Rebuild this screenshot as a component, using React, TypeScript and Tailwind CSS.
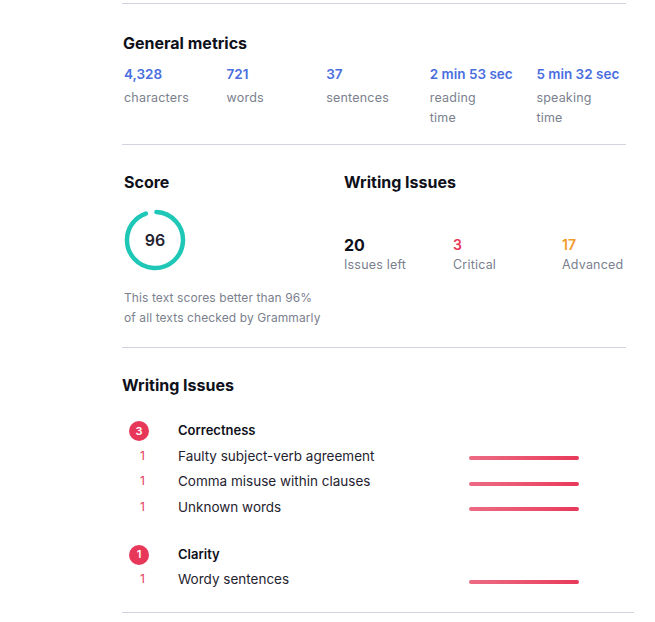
import React from "react";

const metrics = [
  { value: "4,328", label: "characters", w: "w-[104px]" },
  { value: "721", label: "words", w: "w-[100px]" },
  { value: "37", label: "sentences", w: "w-[104px]" },
  { value: "2 min 53 sec", label: "reading time", w: "w-[107px]" },
  { value: "5 min 32 sec", label: "speaking time", w: "w-[90px]" },
];

const groups = [
  {
    name: "Correctness",
    count: 3,
    items: ["Faulty subject-verb agreement", "Comma misuse within clauses", "Unknown words"],
  },
  { name: "Clarity", count: 1, items: ["Wordy sentences"] },
];

function ScoreRing({ score }: { score: number }) {
  const r = 28;
  const c = 2 * Math.PI * r;
  return (
    <div className="relative w-[62px] h-[62px]">
      <svg width="62" height="62" viewBox="0 0 62 62" className="-rotate-90">
        <circle
          cx="31"
          cy="31"
          r={r}
          fill="none"
          stroke="#1ec7b6"
          strokeWidth="4.5"
          strokeLinecap="round"
          strokeDasharray={`${(c * score) / 100 - 4} ${c}`}
          transform="rotate(3 31 31)"
        />
      </svg>
      <span className="absolute inset-0 flex items-center justify-center text-[16px] font-semibold text-[#1f2330]">
        {score}
      </span>
    </div>
  );
}

export default function App() {
  return (
    <div className="min-h-[622px] bg-white font-['Inter',sans-serif] text-[#0e101a]">
      <div className="ml-[122px] w-[504px] pt-[3px]">
        <div className="border-t border-[#d2d5df]" />

        <section className="pt-[28px] pb-[16px] pl-[1px]">
          <h2 className="text-[16px] font-bold leading-[22px]">General metrics</h2>
          <div className="flex mt-[10px]">
            {metrics.map((m) => (
              <div key={m.value} className={`${m.w} ${m.value === "4,328" ? "pl-[1px]" : ""}`}>
                <div className="text-[13.5px] font-semibold text-[#4a6ee0] leading-[20px]">{m.value}</div>
                <div className="max-w-[70px] text-[12.5px] tracking-[0.2px] text-[#7b7f8e] leading-[20px] mt-[4px]">
                  {m.label}
                </div>
              </div>
            ))}
          </div>
        </section>

        <div className="border-t border-[#d2d5df]" />

        <section className="flex pt-[26px] pb-[19px]">
          <div className="w-[222px] pl-[2px]">
            <h2 className="text-[16px] font-bold leading-[22px]">Score</h2>
            <div className="mt-[16px]">
              <ScoreRing score={96} />
            </div>
            <p className="mt-[17px] text-[12px] leading-[20px] tracking-[0.1px] text-[#7b7f8e]">
              This text scores better than 96%
              <br />
              of all texts checked by Grammarly
            </p>
          </div>
          <div>
            <h2 className="text-[16px] font-bold leading-[22px]">Writing Issues</h2>
            <div className="flex mt-[42px]">
              <div className="w-[109px]">
                <div className="text-[16px] font-bold leading-[20px]">20</div>
                <div className="text-[12.5px] tracking-[0.2px] text-[#7b7f8e] leading-[20px]">Issues left</div>
              </div>
              <div className="w-[109px]">
                <div className="text-[14px] font-semibold text-[#e8385a] leading-[20px]">3</div>
                <div className="text-[12.5px] tracking-[0.2px] text-[#7b7f8e] leading-[20px]">Critical</div>
              </div>
              <div>
                <div className="text-[14px] font-semibold text-[#f09a2a] leading-[20px]">17</div>
                <div className="text-[12.5px] tracking-[0.2px] text-[#7b7f8e] leading-[20px]">Advanced</div>
              </div>
            </div>
          </div>
        </section>

        <div className="border-t border-[#d2d5df]" />

        <section className="pt-[26px] pb-[20px]">
          <h2 className="text-[16px] font-bold leading-[22px]">Writing Issues</h2>
          <div className="mt-[23px] flex flex-col gap-[23px]">
            {groups.map((g) => (
              <div key={g.name}>
                <div className="flex items-center h-[24px]">
                  <div className="w-[56px] pl-[7px]">
                    <span className="flex w-[20px] h-[20px] rounded-full bg-[#e8385a] text-white text-[11px] font-semibold items-center justify-center">
                      {g.count}
                    </span>
                  </div>
                  <span className="text-[13px] font-semibold">{g.name}</span>
                </div>
                {g.items.map((it) => (
                  <div key={it} className="flex items-center h-[25.5px]">
                    <span className="w-[56px] pl-[18px] text-[12px] text-[#e8385a]">1</span>
                    <span className="w-[291px] text-[13.5px] text-[#1f2330]">{it}</span>
                    <span className="mt-[5px] w-[110px] h-[4px] rounded-full bg-gradient-to-r from-[#ec6a84] to-[#e8385a]" />
                  </div>
                ))}
              </div>
            ))}
          </div>
        </section>

        <div className="border-t border-[#d2d5df] w-[512px]" />
      </div>
    </div>
  );
}
